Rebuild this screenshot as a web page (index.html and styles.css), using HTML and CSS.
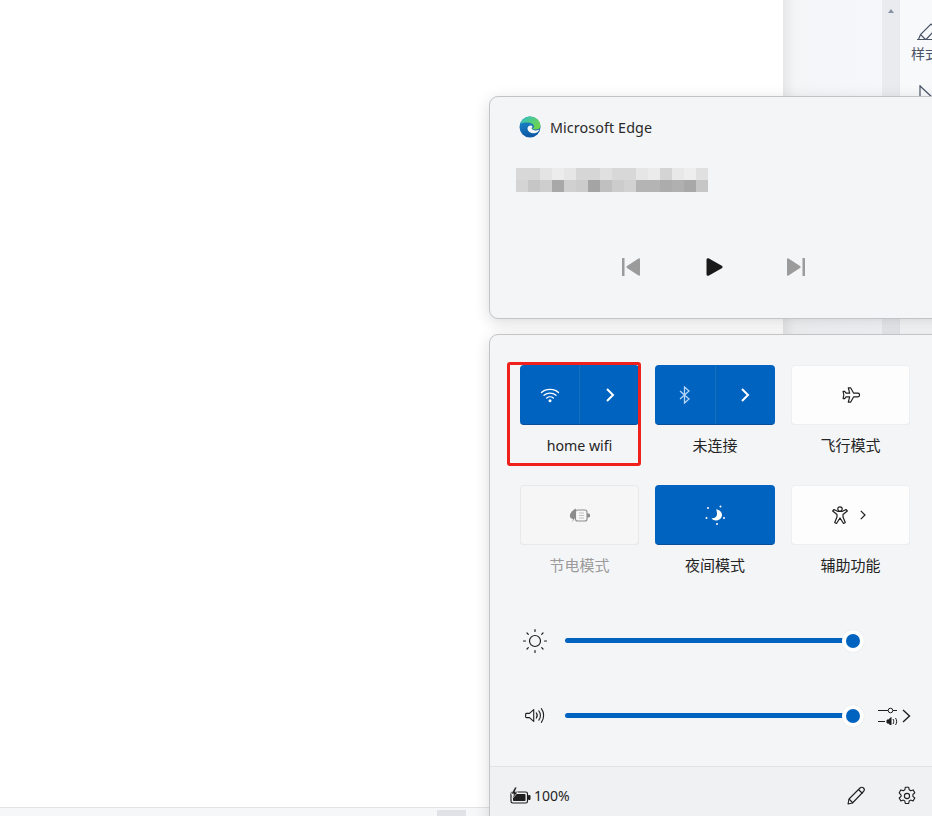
FILE: index.html
```html
<!DOCTYPE html>
<html lang="zh-CN">
<head>
<meta charset="utf-8">
<title>Quick settings</title>
<link rel="stylesheet" href="styles.css">
</head>
<body>
<div class="screen">
  <div class="doc">
    <main class="doc-main">
      <div class="doc-page"></div>
      <div class="hscroll"><div class="hthumb"></div></div>
    </main>
    <div class="doc-gutter"></div>
    <div class="vscroll"><span class="vscroll-arrow"></span></div>
    <aside class="ribbon">
      <svg class="rb-icon" width="20" height="20" viewBox="0 0 20 20" fill="none" stroke="#4a5366" stroke-width="1.2"><path d="M1 17.5h18M2.500 17.500l2-5L15 2l5 5-10 10.500M4.500 12.500l5 5"/></svg>
      <span class="rb-label rb-first">样式</span>
      <svg class="rb-icon2" width="16" height="14" viewBox="0 0 16 14" fill="none" stroke="#4a5366" stroke-width="1.200"><path d="M1 0v14M1 1l14 13"/></svg>
      <span class="rb-label rb-hidden">选择</span>
    </aside>
  </div>

  <section class="panel media">
    <header class="media-head">
      <svg width="22" height="22" viewBox="0 0 22 22">
        <defs>
          <linearGradient id="eg1" x1="0" y1="0" x2="0.300" y2="1"><stop offset="0" stop-color="#1f8fd0"/><stop offset="1" stop-color="#0c59a4"/></linearGradient>
          <linearGradient id="eg2" x1="0" y1="0" x2="1" y2="0.600"><stop offset="0" stop-color="#2fc0c8"/><stop offset="1" stop-color="#6fd34e"/></linearGradient>
        </defs>
        <circle cx="11" cy="11" r="10.500" fill="url(#eg1)"/>
        <path d="M1.500 8C3 3 7 .500 11 .500c6 0 10.500 4.500 10.500 9.500 0 2.500-2.500 3.500-5 3.500-1.500 0-3-.5-3.500-1 2-.5 2.500-2 1.500-3.500C13 7 10 6.500 7.500 6.500 5 6.500 2.500 7 1.500 8z" fill="url(#eg2)"/>
        <path d="M8.500 12.500c0-2 1.500-3 3-3 1.300 0 2 .7 2 1.300 0 .7-.5 1-1 1.300.3 1.500 2 2.300 4.500 2.300 1 0 2.500-.4 3.500-1.100-1 2.500-3 4-5.500 4-3.500 0-6.500-2-6.500-4.800z" fill="#f4f7f7"/>
      </svg>
      <span class="media-app">Microsoft Edge</span>
    </header>
    <div class="mosaic" aria-hidden="true">
      <i class="g216"></i><i class="g216"></i><i class="g228"></i><i class="g236"></i><i class="g230"></i><i class="g214"></i><i class="g214"></i><i class="g224"></i><i class="g216"></i><i class="g216"></i><i class="g230"></i><i class="g235"></i><i class="g212"></i><i class="g232"></i><i class="g238"></i><i class="g224"></i>
      <i class="g212"></i><i class="g198"></i><i class="g206"></i><i class="g168"></i><i class="g208"></i><i class="g204"></i><i class="g164"></i><i class="g192"></i><i class="g204"></i><i class="g210"></i><i class="g180"></i><i class="g180"></i><i class="g172"></i><i class="g176"></i><i class="g168"></i><i class="g198"></i>
    </div>
    <div class="media-ctrl">
      <svg width="18" height="18" viewBox="0 0 18 18" fill="#9b9b9b"><rect x="0" y="0" width="2.500" height="18" rx=".6"/><path d="M18 1.200v15.600c0 .8-.8 1.100-1.500.7L5 10c-.8-.5-.8-1.500 0-2L16.500.5c.7-.4 1.500-.1 1.500.7z"/></svg>
      <svg class="play" width="18" height="18" viewBox="0 0 18 18" fill="#1a1a1a"><path d="M.5 1.800v14.400c0 1.400 1.300 2.100 2.500 1.400L15.800 10.300c1-.6 1-2 0-2.600L3 .4C1.800-.3.500.4.500 1.800z"/></svg>
      <svg width="18" height="18" viewBox="0 0 18 18" fill="#9b9b9b"><rect x="15.500" y="0" width="2.500" height="18" rx=".6"/><path d="M0 1.200v15.600c0 .8.800 1.100 1.500.7L13 10c.8-.5.8-1.500 0-2L1.500.5C.8.100 0 .4 0 1.200z"/></svg>
    </div>
  </section>

  <section class="panel settings">
    <div class="tiles">
      <div class="tile-cell">
        <div class="tile on split">
          <span class="part">
            <svg width="20" height="16" viewBox="0 0 20 16" fill="none" stroke="#fff" stroke-width="1.300" stroke-linecap="round"><path d="M1.500 5.500C6 1.300 14 1.300 18.500 5.500M4 8.300c3.300-3 8.700-3 12 0M6.700 11c1.800-1.500 4.800-1.500 6.600 0"/><circle cx="10" cy="13.800" r="1.500" fill="#fff" stroke="none"/></svg>
          </span>
          <span class="part">
            <svg width="10" height="14" viewBox="0 0 10 14" fill="none" stroke="#fff" stroke-width="2"><path d="M2 1l6 6-6 6"/></svg>
          </span>
        </div>
        <span class="tile-label latin">home wifi</span>
      </div>
      <div class="tile-cell">
        <div class="tile on split">
          <span class="part">
            <svg width="12" height="18" viewBox="0 0 12 18" fill="none" stroke="#b5d6f5" stroke-width="1.300"><path d="M1 5l9 8-4.500 4V1L10 5l-9 8"/></svg>
          </span>
          <span class="part">
            <svg width="10" height="14" viewBox="0 0 10 14" fill="none" stroke="#fff" stroke-width="2"><path d="M2 1l6 6-6 6"/></svg>
          </span>
        </div>
        <span class="tile-label">未连接</span>
      </div>
      <div class="tile-cell">
        <div class="tile off">
          <svg width="18" height="18" viewBox="0 0 20 18" fill="none" stroke="#1f1f1f" stroke-width="1.300" stroke-linejoin="round"><path d="M7 1h2.500l3.500 6h4.500c1.200 0 2 .9 2 2s-.8 2-2 2H13l-3.500 6H7l1.500-6H4.500L3 13H1.200L2 9 1.200 5H3l1.500 2h4z"/></svg>
        </div>
        <span class="tile-label">飞行模式</span>
      </div>
      <div class="tile-cell">
        <div class="tile disabled">
          <svg width="21" height="15" viewBox="0 0 21 15" fill="none" stroke="#8c8c8c" stroke-width="1.100"><rect x="6.500" y="2" width="11.500" height="11" rx="2"/><path d="M18 6h1.500c.5 0 1 .5 1 1.500S20 9 19.500 9H18" fill="#8c8c8c"/><path d="M7 .5C3 2.500.5 5.500 1 8.500c.3 1.500 1.500 2.500 3 2.500-.3 1-.4 2-.4 3.500.6-2 1.400-3.500 2.900-5z" fill="#8c8c8c" stroke="none"/><path d="M10 5h5M10 7.500h5M10 10h5" stroke-width=".8" stroke="#b5b5b5"/></svg>
        </div>
        <span class="tile-label dim">节电模式</span>
      </div>
      <div class="tile-cell">
        <div class="tile on">
          <svg width="20" height="20" viewBox="0 0 20 20" fill="#fff"><path d="M11 4.500c3.500 0 6 2.500 6 5.500s-2.800 5.500-6 5.500c-2 0-3.500-.8-4.500-2.200 3 .2 5.500-1.500 5.500-4.300 0-1.800-.3-3.200-1-4.500z"/><circle cx="3" cy="3" r="1"/><circle cx="1.500" cy="13" r="1"/><circle cx="15.500" cy="1.500" r="1"/><circle cx="19" cy="13" r="1"/><circle cx="12" cy="19" r="1"/></svg>
        </div>
        <span class="tile-label">夜间模式</span>
      </div>
      <div class="tile-cell">
        <div class="tile off access">
          <svg width="16" height="18" viewBox="0 0 16 18" fill="none" stroke="#1f1f1f" stroke-width="1.200" stroke-linejoin="round"><circle cx="8" cy="3" r="2.200"/><path d="M2 3.500L.7 5l4.300 3.500V11l-2.300 5.500 1.800 1L8 12l3.500 5.500 1.800-1L11 11V8.500L15.300 5 14 3.500 10 5.500H6z"/></svg>
          <svg class="access-chev" width="6" height="10" viewBox="0 0 6 10" fill="none" stroke="#1f1f1f" stroke-width="1.200"><path d="M.8.800L5 5 .8 9.200"/></svg>
        </div>
        <span class="tile-label">辅助功能</span>
      </div>
    </div>

    <div class="sliders">
      <div class="slider-row">
        <svg class="slider-icon" width="26" height="26" viewBox="0 0 26 26" fill="none" stroke="#1f1f1f" stroke-width="1.200" stroke-linecap="round"><circle cx="13" cy="13" r="5.500"/><path d="M13 1.500v2M13 22.500v2M1.500 13h2M22.500 13h2M5 5l1.300 1.300M19.700 19.700L21 21M5 21l1.300-1.300M19.700 6.300L21 5"/></svg>
        <div class="track"><span class="thumb"></span></div>
      </div>
      <div class="slider-row">
        <svg class="slider-icon" width="28" height="17" viewBox="0 0 24 20" fill="none" stroke="#1f1f1f" stroke-width="1.300" stroke-linejoin="round" stroke-linecap="round"><path d="M2 7.500h3.500L10.500 3v14l-5-4.500H2c-.5 0-1-.5-1-1v-3c0-.5.5-1 1-1z"/><path d="M13.500 7c1.300 1.600 1.300 4.400 0 6M16.500 4.500c2.500 3 2.500 8 0 11M19.500 2c3.500 4.500 3.500 11.500 0 16"/></svg>
        <div class="track"><span class="thumb"></span></div>
        <div class="mixer">
          <svg width="20" height="18" viewBox="0 0 20 18" fill="none" stroke="#1f1f1f" stroke-width="1"><path d="M0 3.500h10M15 3.500h4"/><circle cx="12.500" cy="3.500" r="2.300"/><path d="M0 14.500h7"/><path d="M9 13h1.500l2.500-2.500v8L10.500 16H9z" fill="#1f1f1f"/><path d="M15 12c1 1.500 1 3.500 0 5M17.500 11c1.500 2 1.500 5 0 7"/></svg>
          <svg width="9" height="14" viewBox="0 0 9 14" fill="none" stroke="#1f1f1f" stroke-width="1.400"><path d="M1 1l6.500 6L1 13"/></svg>
        </div>
      </div>
    </div>

    <footer class="settings-foot">
      <div class="battery">
        <svg width="21" height="17" viewBox="0 0 21 17" fill="#1f1f1f"><rect x="1" y="5" width="16.500" height="11" rx="1.800" fill="none" stroke="#1f1f1f" stroke-width="1.200"/><rect x="3" y="7" width="12.500" height="7" rx=".8"/><rect x="18" y="8" width="2.500" height="5" rx="1"/><path d="M5 0L1 7h3l-2 5 6-7H5l2-5z" stroke="#f1f2f4" stroke-width=".7"/></svg>
        <span>100%</span>
      </div>
      <div class="foot-actions">
        <svg width="20" height="20" viewBox="0 0 20 20" fill="none" stroke="#1f1f1f" stroke-width="1.100" stroke-linejoin="round"><path d="M2 18l1-5L14 2c1-1 2.500-1 3.500 0s1 2.500 0 3.500L6.500 17z"/><path d="M12.500 3.500l4 4M3 13l4 4"/></svg>
        <svg width="20" height="20" viewBox="0 0 20 20" fill="none" stroke="#1f1f1f" stroke-width="1.100" stroke-linejoin="round"><path d="M8.300 1.300h3.400l.5 2.500 1.500.9 2.400-.8 1.700 2.900-1.900 1.700v1.800l1.900 1.700-1.700 2.900-2.400-.8-1.500.9-.5 2.500H8.300l-.5-2.500-1.500-.9-2.400.8-1.700-2.900 1.900-1.700V9.100L2.200 6.800l1.700-2.900 2.400.8 1.500-.9z"/><circle cx="10" cy="10" r="2.600"/></svg>
      </div>
    </footer>
  </section>

  <div class="highlight"></div>
</div>
</body>
</html>
```
FILE: styles.css
```css
* { box-sizing: border-box; }
html, body { margin: 0; padding: 0; background: #fff; }
body { font-family: "Noto Sans", "Noto Sans CJK SC", sans-serif; color: #1f1f1f; }

.screen { position: relative; width: 932px; height: 816px; overflow: hidden; }

/* background document window */
.doc { display: flex; height: 100%; }
.doc-main { width: 783px; display: flex; flex-direction: column; }
.doc-page { flex: 1; background: #fff; }
.hscroll { height: 9px; background: #f6f7f8; border-top: 1px solid #e2e3e5; padding-left: 437px; display: flex; align-items: flex-end; }
.hthumb { width: 29px; height: 6px; background: #dfe2e6; }
.doc-gutter { width: 99px; background: linear-gradient(90deg, #e6e7e9 0, #f4f5f7 12px, #f6f7fa 100%); }
.vscroll { width: 17px; background: #e9ebef; display: flex; justify-content: center; padding-top: 9px; }
.vscroll-arrow { width: 0; height: 0; border: 3px solid transparent; border-bottom: 4px solid #8a93a3; border-top: 0; }
.ribbon { flex: 1; background: #f8f9fb; border-left: 1px solid #e6e8ec; padding: 22px 0 0 11px; display: flex; flex-direction: column; overflow: hidden; }
.rb-icon { margin-left: 5px; flex: none; }
.rb-label { font-size: 14px; line-height: 20px; color: #4a5366; white-space: nowrap; }
.rb-first { margin-top: 2px; }
.rb-icon2 { margin: 21px 0 0 8px; flex: none; }
.rb-hidden { margin-top: 203px; }

/* flyouts, floating over the desktop */
.panel { position: absolute; left: 489px; width: 470px; background: #f4f5f7; border: 1px solid #c2c4c6; border-radius: 9px; box-shadow: 0 4px 16px rgba(0,0,0,.14); }

.media { top: 96px; height: 223px; padding: 18px 0 0 26px; }
.media-head { display: flex; align-items: center; gap: 9px; margin-left: 3px; height: 24px; }
.media-app { font-size: 14.300px; letter-spacing: .1px; color: #2a2a2a; }
.mosaic { display: grid; grid-template-columns: repeat(16, 12px); grid-auto-rows: 12px; margin-top: 29px; width: 192px; }
.g164 { background: #a4a4a4; } .g168 { background: #a8a8a8; } .g172 { background: #acacac; } .g176 { background: #b0b0b0; }
.g180 { background: #b4b4b4; } .g192 { background: #c0c0c0; } .g198 { background: #c6c6c6; } .g204 { background: #cccccc; }
.g206 { background: #cecece; } .g208 { background: #d0d0d0; } .g210 { background: #d2d2d2; } .g212 { background: #d4d4d4; }
.g214 { background: #d6d6d6; } .g216 { background: #d8d8d8; } .g224 { background: #e0e0e0; } .g228 { background: #e4e4e4; }
.g230 { background: #e6e6e6; } .g232 { background: #e8e8e8; } .g235 { background: #ebebeb; } .g236 { background: #ececec; } .g238 { background: #eeeeee; }
.media-ctrl { display: flex; margin: 66px 0 0 106px; }
.media-ctrl svg { flex: none; }
.media-ctrl .play { margin: 0 63px 0 66px; }

.settings { top: 334px; height: 500px; display: flex; flex-direction: column; padding-top: 30px; }
.tiles { display: grid; grid-template-columns: 119px 120px 119px; column-gap: 16px; width: 390px; margin-left: 30px; }
.tile-cell { display: flex; flex-direction: column; align-items: center; height: 120px; }
.tile { width: 100%; height: 60px; border-radius: 4px; display: flex; align-items: center; justify-content: center; flex: none; }
.tile.on { background: #0063bf; border-bottom: 1px solid #0a4f96; }
.tile.off { background: #fdfdfe; box-shadow: inset 0 0 0 1px #eeeff0, inset 0 -1px 0 #d8d9db; }
.tile.disabled { background: #f6f6f7; box-shadow: inset 0 0 0 1px #e8e9ea, inset 0 -1px 0 #dcdddf; }
.tile.access { gap: 12px; padding-right: 3px; }
.split { justify-content: stretch; }
.part { flex: 1; height: 100%; display: flex; align-items: center; justify-content: center; }
.part + .part { border-left: 1px solid #1a6fbd; }
.tile-label { font-size: 15px; line-height: 20px; margin-top: 10px; color: #242424; }
.tile-label.latin { font-size: 14.200px; margin-top: 11px; }
.tile-label.dim { color: #9b9b9b; }

.sliders { margin-top: 23px; display: flex; flex-direction: column; gap: 50px; padding-left: 31px; }
.slider-row { display: flex; align-items: center; height: 25px; position: relative; }
.slider-icon { flex: none; width: 28px; margin-right: 16px; }
.track { width: 298px; height: 5px; background: #0063bf; border-radius: 3px; position: relative; flex: none; }
.thumb { position: absolute; right: -1px; top: -8.500px; width: 22px; height: 22px; border-radius: 50%; background: #0063bf; border: 4px solid #fff; box-shadow: 0 0 1px rgba(0,0,0,.15); }
.mixer { display: flex; align-items: center; gap: 4px; margin-left: 15px; flex: none; }

.settings-foot { position: absolute; left: 0; top: 431px; width: 100%; height: 70px; background: #f0f1f3; border-top: 1px solid #e2e3e5; padding: 16px 0 0 20px; display: flex; }
.battery { display: flex; align-items: center; gap: 3px; font-size: 14px; height: 24px; }
.foot-actions { display: flex; gap: 31px; margin-left: 276px; height: 24px; align-items: center; margin-top: 1px; }

.highlight { position: absolute; left: 507px; top: 362px; width: 134px; height: 104px; border: 3px solid #f0201c; border-radius: 3px; }
```
